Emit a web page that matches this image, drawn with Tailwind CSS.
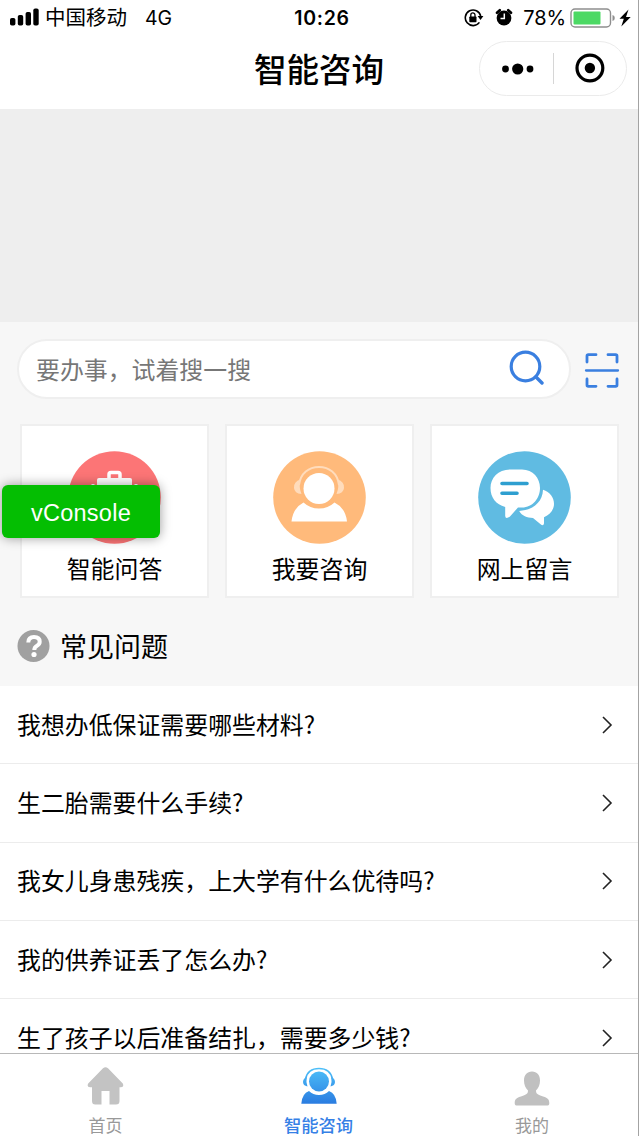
<!DOCTYPE html>
<html lang="zh-CN">
<head>
<meta charset="utf-8">
<title>智能咨询</title>
<script src="https://cdn.jsdelivr.net/npm/@tailwindcss/browser@4"></script>
</head>
<body class="bg-white">
<div class="relative flex h-[1136px] w-[639px] flex-col overflow-hidden border-r border-[#a3a3a3] bg-[#f7f7f7] font-['Noto_Sans_CJK_SC',sans-serif] text-black">

  <!-- Status bar -->
  <div class="grid h-9 shrink-0 grid-cols-3 items-center bg-white pl-[10px] pr-[6px] font-[Inter,'Noto_Sans_CJK_SC',sans-serif] text-[20px] leading-9">
    <div class="flex items-center">
      <svg class="mr-[6px] block" width="29" height="20" viewBox="0 0 29 20"><rect x="0" y="10" width="5.4" height="7.6" rx="1.8"/><rect x="7.8" y="7" width="5.4" height="10.6" rx="1.8"/><rect x="15.6" y="4" width="5.4" height="13.6" rx="1.8"/><rect x="23.3" y="0.6" width="5.4" height="17" rx="1.8"/></svg>
      <span class="text-[20.5px]">中国移动</span>
      <span class="ml-[18px] text-[19.5px]">4G</span>
    </div>
    <div class="pl-[2px] text-center text-[19.5px] font-semibold tracking-[0.7px]">10:26</div>
    <div class="flex items-center justify-end">
      <svg class="block" width="20" height="20" viewBox="0 0 20 20"><path d="M15.4 14.4A7.8 7.8 0 1 1 16.700 8" fill="none" stroke="#000" stroke-width="1.600"/><path d="M13.600 8h5.800l-2.900 3.900z"/><rect x="5.300" y="8.400" width="7.200" height="5.800" rx=".8"/><path d="M6.800 9V7a2.100 2.100 0 0 1 4.200 0v2" fill="none" stroke="#000" stroke-width="1.300"/></svg>
      <svg class="ml-[11px] block" width="18" height="20" viewBox="0 0 18 20"><circle cx="9" cy="10" r="7.400"/><path d="M2 4.800 4.800 2.200M16 4.800 13.200 2.200" stroke="#000" stroke-width="2.600" stroke-linecap="round"/><path d="M9.300 5.600v5H5.500" fill="none" stroke="#fff" stroke-width="1.500"/></svg>
      <span class="ml-[10px] text-[20px] tracking-[-0.100px]">78%</span>
      <svg class="ml-[4px] block" width="62" height="22" viewBox="0 0 62 22"><rect x="1" y="2" width="39.500" height="18" rx="4" fill="#fff" stroke="#8e8e8e" stroke-width="1.400"/><rect x="3.500" y="4.500" width="27" height="13" rx="1" fill="#4cd964"/><path d="M42.500 8q2.300.6 2.300 3t-2.300 3z" fill="#8e8e8e"/><path d="m58.500 2.500-9 9.300h4.300L51.300 19.500l9.400-9.600h-4.700z"/></svg>
    </div>
  </div>

  <!-- Navigation bar -->
  <div class="relative flex h-[73px] shrink-0 items-center justify-center bg-white">
    <h1 class="-mt-[9px] text-[32.500px] font-medium leading-10">智能咨询</h1>
    <div class="absolute right-[11px] top-[5px] flex h-[55px] w-[148px] items-center rounded-full border border-[#ebebeb] bg-white">
      <svg class="block" width="146" height="53" viewBox="0 0 146 53"><circle cx="25.500" cy="27" r="3.400"/><circle cx="37.700" cy="27" r="5.600"/><circle cx="50" cy="27" r="3.400"/><path d="M73.500 11v31" stroke="#d6d6d6"/><circle cx="109.900" cy="26" r="12.900" fill="none" stroke="#000" stroke-width="3.200"/><circle cx="109.900" cy="26" r="5.200"/></svg>
    </div>
  </div>

  <!-- Banner -->
  <div class="h-[213px] shrink-0 bg-[#eeeeee]"></div>

  <!-- Search -->
  <div class="flex shrink-0 items-center pl-[17px] pt-[17px]">
    <div class="flex h-[60px] w-[554px] items-center justify-between rounded-full border-2 border-[#efefef] bg-white pl-[17px] pr-[24px]">
      <span class="text-[23.900px] leading-[36px] text-[#777777]">要办事，试着搜一搜</span>
      <svg class="mb-[5px] block" width="36" height="36" viewBox="0 0 36 36" fill="none" stroke="#3a7fe0" stroke-linecap="round"><circle cx="16.500" cy="17.500" r="14.300" stroke-width="3.200"/><path d="m27 28 6 6" stroke-width="3.400"/></svg>
    </div>
    <svg class="ml-[13px] mt-[2px] block" width="36" height="36" viewBox="0 0 36 36" fill="none" stroke="#3a7fe0" stroke-linecap="round" stroke-linejoin="round"><path d="M3 10V4q0-1.300 1.300-1.300H12M24 2.700h7.700Q33 2.700 33 4v6M3 27v6q0 1.300 1.300 1.300H12M24 34.300h7.700Q33 34.300 33 33v-6" stroke-width="2.800"/><path d="M2 18.500h32" stroke-width="2.300"/></svg>
  </div>

  <!-- Shortcuts -->
  <div class="ml-[20px] mt-[25px] grid w-[599px] shrink-0 grid-cols-3 gap-[16px]">
    <div class="flex h-[174px] flex-col items-center border-2 border-[#efefef] bg-white pt-[25px]">
      <svg class="block" width="93" height="93" viewBox="0 0 93 93"><circle cx="46.500" cy="46.500" r="46.300" fill="#fc7576"/><path d="M41 28v-4.500q0-2 2-2h7q2 0 2 2V28" fill="none" stroke="#fff" stroke-width="3.500"/><rect x="29" y="27" width="35" height="34" rx="2" fill="#fff"/><path d="M23.500 33h3v25h-3zM66.500 33h3v25h-3z" fill="#fff"/></svg>
      <span class="mt-[6px] text-[23.900px] leading-[36px]">智能问答</span>
    </div>
    <div class="flex h-[174px] flex-col items-center border-2 border-[#efefef] bg-white pt-[25px]">
      <svg class="block" width="93" height="93" viewBox="0 0 93 93"><circle cx="46.500" cy="46.500" r="46.300" fill="#ffba7b"/><path d="M26 34C27.500 22 36 16 46 16s18.500 6 20 18" fill="none" stroke="#ffdcbc" stroke-width="2"/><path d="M27.500 28.500q-7 2-6.500 8.500.5 5.500 7.500 6-3-7-1-14.500zM64.500 28.500q7 2 6.500 8.500-.5 5.500-7.500 6 3-7 1-14.500z" fill="#ffdcbc"/><circle cx="46" cy="37.500" r="15.500" fill="#fff"/><path d="M18.500 70.500Q20 57 30.500 51.500 37 57.500 46 57.500t15.500-6Q72.500 57 74 70.500z" fill="#fff"/></svg>
      <span class="mt-[6px] text-[23.900px] leading-[36px]">我要咨询</span>
    </div>
    <div class="flex h-[174px] flex-col items-center border-2 border-[#efefef] bg-white pt-[25px]">
      <svg class="block" width="93" height="93" viewBox="0 0 93 93"><circle cx="46.500" cy="46.500" r="46.300" fill="#60bbe2"/><path d="M32 18.500h12C55 18.500 62 27 62 37s-7 19.500-18 19.500h-4L32 65.500q-4.500 3-4.800-.5V56C18 53.500 12.500 46.500 12.500 37 12.500 27 20 18.500 32 18.500z" fill="#fff"/><path d="M65 38.700c7 2 11 8 11 14 0 6-4 11-10 13.500v6c-.5 3-2.500 2-4 .5L55 67c-6-.3-11-2-13.800-7C54 59 64.500 52 65 38.700z" fill="#fff"/><path d="M24 32.500h25M24 42.300h15" stroke="#2e9fd0" stroke-width="3.600" stroke-linecap="round"/></svg>
      <span class="mt-[6px] text-[23.900px] leading-[36px]">网上留言</span>
    </div>
  </div>

  <!-- FAQ heading -->
  <div class="flex h-[88px] shrink-0 items-center gap-[10px] pl-[17px] pt-[8px]">
    <svg class="block" width="33" height="34" viewBox="0 0 33 34"><circle cx="16.500" cy="17" r="16" fill="#a0a0a0"/><path d="M11.300 13.500q0-5.500 5.700-5.500t5.700 4.700q0 2.500-2.700 4-2.700 1.500-2.700 4.300" fill="none" stroke="#fff" stroke-width="4"/><circle cx="17" cy="25.500" r="2.600" fill="#fff"/></svg>
    <h2 class="text-[27px] leading-10">常见问题</h2>
  </div>

  <!-- FAQ list -->
  <ul class="flex min-h-0 flex-1 flex-col overflow-hidden bg-white text-[23.900px] leading-[36px]">
    <li class="flex h-[78.300px] shrink-0 items-center justify-between border-b border-[#ececec] pl-[17px] pr-[25px]"><span class="-mt-[2px]">我想办低保证需要哪些材料?</span><svg class="block" width="12" height="18" viewBox="0 0 12 18" fill="none" stroke="#222" stroke-width="1.600"><path d="m2 1 8 8-8 8"/></svg></li>
    <li class="flex h-[78.300px] shrink-0 items-center justify-between border-b border-[#ececec] pl-[17px] pr-[25px]"><span class="-mt-[2px]">生二胎需要什么手续?</span><svg class="block" width="12" height="18" viewBox="0 0 12 18" fill="none" stroke="#222" stroke-width="1.600"><path d="m2 1 8 8-8 8"/></svg></li>
    <li class="flex h-[78.300px] shrink-0 items-center justify-between border-b border-[#ececec] pl-[17px] pr-[25px]"><span class="-mt-[2px]">我女儿身患残疾，上大学有什么优待吗?</span><svg class="block" width="12" height="18" viewBox="0 0 12 18" fill="none" stroke="#222" stroke-width="1.600"><path d="m2 1 8 8-8 8"/></svg></li>
    <li class="flex h-[78.300px] shrink-0 items-center justify-between border-b border-[#ececec] pl-[17px] pr-[25px]"><span class="-mt-[2px]">我的供养证丢了怎么办?</span><svg class="block" width="12" height="18" viewBox="0 0 12 18" fill="none" stroke="#222" stroke-width="1.600"><path d="m2 1 8 8-8 8"/></svg></li>
    <li class="flex h-[78.300px] shrink-0 items-center justify-between border-b border-[#ececec] pl-[17px] pr-[25px]"><span class="-mt-[2px]">生了孩子以后准备结扎，需要多少钱?</span><svg class="block" width="12" height="18" viewBox="0 0 12 18" fill="none" stroke="#222" stroke-width="1.600"><path d="m2 1 8 8-8 8"/></svg></li>
  </ul>

  <!-- Tab bar -->
  <nav class="grid h-[83px] shrink-0 grid-cols-[211px_215px_212px] border-t border-[#b8b8b8] bg-white text-[17px] leading-[24px] text-[#999999]">
    <div class="flex flex-col items-center pt-[12px]">
      <svg class="block" width="37" height="40" viewBox="0 0 37 40" fill="#c3c3c3"><path d="M16 2.300q2.500-2 5 0L35.800 17.500q1.500 3.500-1.800 3.800h-1.500V35q0 3.500-3.500 3.500h-6.500V25h-8v13.500H8.300Q5 38.500 5 35V21.300H3Q-.5 21 1.200 17.500z"/></svg>
      <span class="mt-[7px]">首页</span>
    </div>
    <div class="flex flex-col items-center pt-[12px] text-[#3580e6]">
      <svg class="block" width="36" height="40" viewBox="0 0 36 40"><defs><linearGradient id="tab" x1="0" y1="0" x2="0" y2="40" gradientUnits="userSpaceOnUse"><stop stop-color="#4fc3fa"/><stop offset="1" stop-color="#2878df"/></linearGradient></defs><path d="M4.500 13C6 6 11 2.500 18 2.500S30 6 31.500 13" fill="none" stroke="url(#tab)" stroke-width="1.600"/><path d="M5.800 11Q2 12.500 2 16t4.500 4.500Q4.800 15.500 5.800 11zM30.200 11Q34 12.500 34 16t-4.500 4.500Q31.200 15.500 30.200 11z" fill="url(#tab)"/><circle cx="18" cy="15.500" r="10" fill="url(#tab)"/><path d="M.3 37.700Q1 27.500 8 25q4 4 10 4t10-4q7 2.500 7.700 12.700z" fill="url(#tab)"/></svg>
      <span class="mt-[7px] text-[17.300px] font-medium">智能咨询</span>
    </div>
    <div class="flex flex-col items-center pt-[12px]">
      <svg class="block" width="36" height="40" viewBox="0 0 36 40" fill="#c0c0c0"><path d="M18 5.500c5 0 8 3.500 8 9 0 4.500-1.500 7.500-4 10 0 3 1.500 4 5 5.300 6 2 8.300 2.700 8.300 7.200 0 1.500-.5 2.500-1.500 2.500H2.200C1.200 39.500.7 38.500.7 37c0-4.500 2.300-5.200 8.300-7.200 3.500-1.300 5-2.300 5-5.300-2.500-2.500-4-5.500-4-10 0-5.500 3-9 8-9z"/></svg>
      <span class="mt-[7px]">我的</span>
    </div>
  </nav>

  <!-- Floating debug button -->
  <div class="absolute left-[2px] top-[485px] flex h-[53px] w-[158px] items-center justify-center rounded-[6px] bg-[#04be02] pt-[4px] font-['Liberation_Sans',sans-serif] text-[23.500px] tracking-[0.250px] text-white shadow-[0_0_12px_rgba(0,0,0,0.4)]">vConsole</div>
</div>
</body>
</html>
